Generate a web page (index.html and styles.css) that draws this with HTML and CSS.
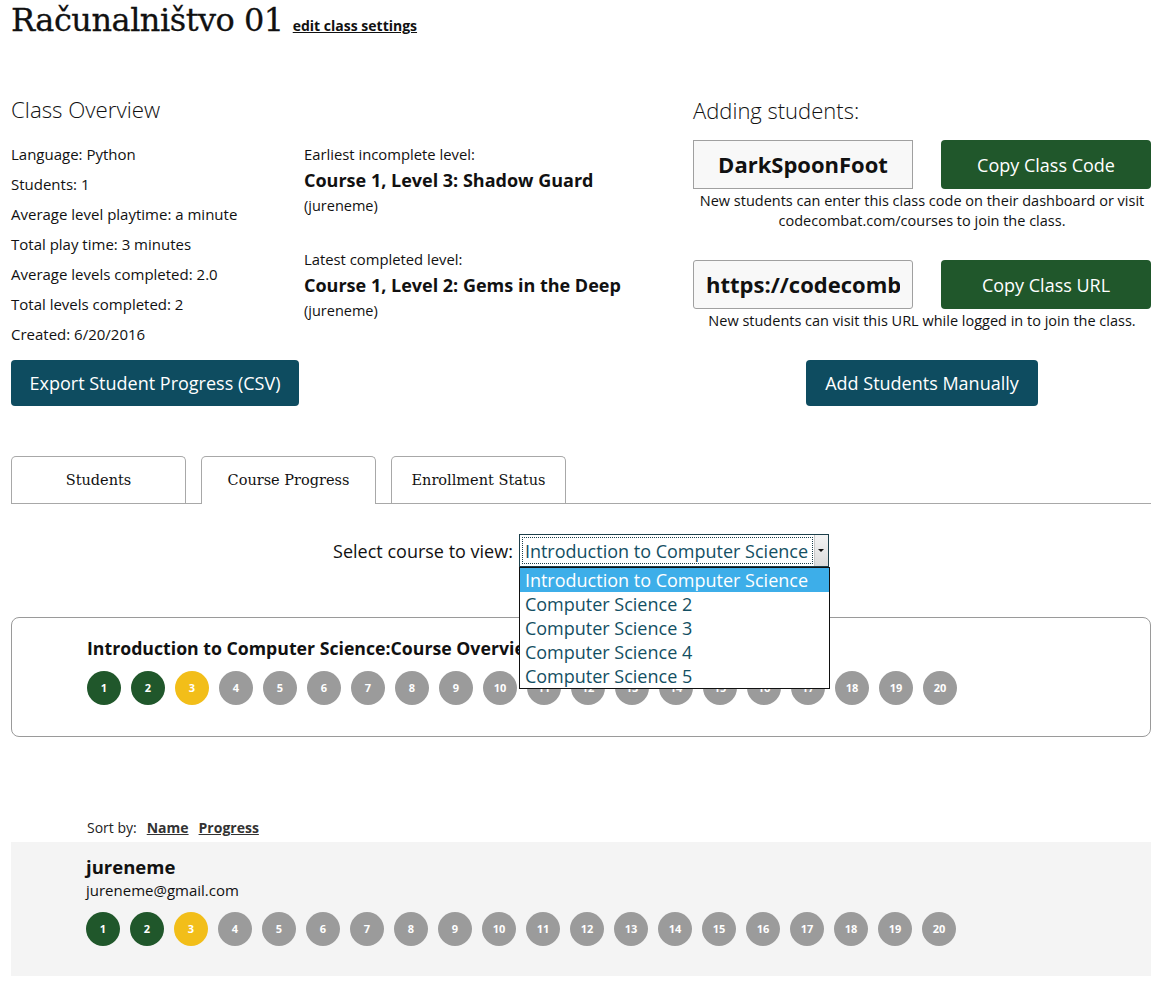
FILE: index.html
```html
<!DOCTYPE html>
<html lang="en">
<head>
<meta charset="utf-8">
<title>Računalništvo 01</title>
<link rel="stylesheet" href="styles.css">
</head>
<body>
<div class="page">
  <header class="title-row">
    <h1 class="class-name">Računalništvo 01</h1>
    <a class="edit-link" href="#">edit class settings</a>
  </header>

  <section class="overview">
    <div class="overview-left">
      <h2 class="section-title">Class Overview</h2>
      <div class="stats-grid">
        <div class="stats">
          <p>Language: Python</p>
          <p>Students: 1</p>
          <p>Average level playtime: a minute</p>
          <p>Total play time: 3 minutes</p>
          <p>Average levels completed: 2.0</p>
          <p>Total levels completed: 2</p>
          <p>Created: 6/20/2016</p>
        </div>
        <div class="levels">
          <div class="level-block">
            <p class="level-label">Earliest incomplete level:</p>
            <p class="level-name">Course 1, Level 3: Shadow Guard</p>
            <p class="level-user">(jureneme)</p>
          </div>
          <div class="level-block">
            <p class="level-label">Latest completed level:</p>
            <p class="level-name">Course 1, Level 2: Gems in the Deep</p>
            <p class="level-user">(jureneme)</p>
          </div>
        </div>
      </div>
      <button class="btn btn-teal btn-export">Export Student Progress (CSV)</button>
    </div>

    <div class="overview-right">
      <h2 class="section-title section-title-right">Adding students:</h2>
      <div class="code-row">
        <div class="code-box">DarkSpoonFoot</div>
        <button class="btn btn-green">Copy Class Code</button>
      </div>
      <p class="caption">New students can enter this class code on their dashboard or visit codecombat.com/courses to join the class.</p>
      <div class="code-row code-row-url">
        <div class="code-box code-box-url"><span class="url-text">https://codecombat.com/courses</span></div>
        <button class="btn btn-green">Copy Class URL</button>
      </div>
      <p class="caption">New students can visit this URL while logged in to join the class.</p>
      <div class="add-row">
        <button class="btn btn-teal btn-add">Add Students Manually</button>
      </div>
    </div>
  </section>

  <nav class="tabs">
    <div class="tab">Students</div>
    <div class="tab tab-active">Course Progress</div>
    <div class="tab">Enrollment Status</div>
  </nav>

  <div class="select-row">
    <span class="select-label">Select course to view:</span>
    <div class="select-wrap">
      <div class="select">
        <span class="select-value">Introduction to Computer Science</span>
        <span class="select-arrow"><span class="tri"></span></span>
      </div>
      <ul class="select-menu">
        <li class="opt opt-selected">Introduction to Computer Science</li>
        <li class="opt">Computer Science 2</li>
        <li class="opt">Computer Science 3</li>
        <li class="opt">Computer Science 4</li>
        <li class="opt">Computer Science 5</li>
      </ul>
    </div>
  </div>

  <section class="course-box">
    <h3 class="course-title">Introduction to Computer Science:Course Overview</h3>
    <div class="dots">
      <span class="dot dot-done">1</span>
      <span class="dot dot-done">2</span>
      <span class="dot dot-current">3</span>
      <span class="dot">4</span>
      <span class="dot">5</span>
      <span class="dot">6</span>
      <span class="dot">7</span>
      <span class="dot">8</span>
      <span class="dot">9</span>
      <span class="dot">10</span>
      <span class="dot">11</span>
      <span class="dot">12</span>
      <span class="dot">13</span>
      <span class="dot">14</span>
      <span class="dot">15</span>
      <span class="dot">16</span>
      <span class="dot">17</span>
      <span class="dot">18</span>
      <span class="dot">19</span>
      <span class="dot">20</span>
    </div>
  </section>

  <div class="sort-row">
    <span class="sort-label">Sort by:</span>
    <a class="sort-link" href="#">Name</a>
    <a class="sort-link" href="#">Progress</a>
  </div>

  <section class="student-row">
    <div class="student-name">jureneme</div>
    <div class="student-email">jureneme@gmail.com</div>
    <div class="dots">
      <span class="dot dot-done">1</span>
      <span class="dot dot-done">2</span>
      <span class="dot dot-current">3</span>
      <span class="dot">4</span>
      <span class="dot">5</span>
      <span class="dot">6</span>
      <span class="dot">7</span>
      <span class="dot">8</span>
      <span class="dot">9</span>
      <span class="dot">10</span>
      <span class="dot">11</span>
      <span class="dot">12</span>
      <span class="dot">13</span>
      <span class="dot">14</span>
      <span class="dot">15</span>
      <span class="dot">16</span>
      <span class="dot">17</span>
      <span class="dot">18</span>
      <span class="dot">19</span>
      <span class="dot">20</span>
    </div>
  </section>
</div>
</body>
</html>
```

FILE: styles.css
```css
* { box-sizing: border-box; }

body {
  margin: 0;
  background: #fff;
  color: #111;
  font-family: "Open Sans", "Liberation Sans", sans-serif;
  font-size: 15px;
  line-height: 20px;
}

p { margin: 0; }

.page {
  width: 1140px;
  margin: 0 12px 0 11px;
}

/* Title */
.title-row {
  display: flex;
  align-items: baseline;
  gap: 9px;
  height: 40px;
}
.class-name {
  margin: 0;
  font-family: "DejaVu Serif", "Liberation Serif", serif;
  font-weight: normal;
  font-size: 32px;
  line-height: 40px;
  letter-spacing: -0.5px;
  color: #111;
  -webkit-text-stroke: 0.3px #111;
}
.edit-link {
  font-weight: bold;
  font-size: 14px;
  color: #111;
  text-decoration: underline;
}

/* Overview */
.overview {
  display: grid;
  grid-template-columns: 682px 458px;
  margin-top: 53px;
}
.section-title {
  margin: 0;
  font-weight: 300;
  font-size: 22.3px;
  line-height: 34px;
  color: #111;
}
.section-title-right { font-size: 22px; }
.stats-grid {
  display: grid;
  grid-template-columns: 293px 1fr;
  margin-top: 17px;
}
.stats {
  display: flex;
  flex-direction: column;
  gap: 10px;
}
.levels {
  display: flex;
  flex-direction: column;
  gap: 33px;
}
.level-label { font-size: 14.8px; }
.level-name {
  font-weight: bold;
  font-size: 18px;
  line-height: 24px;
  margin-top: 4px;
}
.level-user {
  font-size: 14.5px;
  margin-top: 4px;
}

.btn {
  border: none;
  border-radius: 4px;
  color: #fff;
  font-family: "Open Sans", "Liberation Sans", sans-serif;
  font-size: 18px;
  cursor: pointer;
}
.btn-teal { background: #0e4c60; }
.btn-green { background: #20572b; }
.btn-export {
  margin-top: 16px;
  width: 288px;
  height: 46px;
}

.code-row {
  display: flex;
  justify-content: space-between;
  margin-top: 13px;
  height: 49px;
}
.code-row-url { margin-top: 29px; }
.code-box {
  width: 220px;
  height: 49px;
  border: 1px solid #a0a0a0;
  background: #f8f8f8;
  font-weight: bold;
  font-size: 22px;
  line-height: 47px;
  text-align: center;
  overflow: hidden;
  white-space: nowrap;
}
.code-box-url {
  border-radius: 3px;
  text-align: left;
  padding: 0 12px;
}
.url-text {
  display: block;
  overflow: hidden;
}
.code-row .btn {
  width: 210px;
  height: 49px;
}
.caption {
  margin-top: 2px;
  font-size: 14.5px;
  text-align: center;
}
.add-row {
  display: flex;
  justify-content: center;
  margin-top: 29px;
}
.btn-add {
  width: 232px;
  height: 46px;
}

/* Tabs */
.tabs {
  display: flex;
  gap: 15px;
  margin-top: 50px;
  border-bottom: 1px solid #a8a8a8;
}
.tab {
  width: 175px;
  height: 47px;
  border: 1px solid #a8a8a8;
  border-bottom: none;
  border-radius: 5px 5px 0 0;
  font-family: "DejaVu Serif", "Liberation Serif", serif;
  font-size: 14.5px;
  line-height: 46px;
  text-align: center;
  color: #111;
  background: #fff;
}
.tab-active {
  margin-bottom: -1px;
  height: 48px;
}

/* Select */
.select-row {
  display: flex;
  justify-content: center;
  align-items: center;
  gap: 6px;
  margin-top: 30px;
  height: 33px;
}
.select-label {
  font-size: 18px;
}
.select-wrap {
  position: relative;
  width: 310px;
  height: 33px;
}
.select {
  display: flex;
  height: 33px;
  border: 1px solid #1c3f4a;
  background: #fff;
}
.select-value {
  flex: 1;
  margin: 2px 1px 2px 2px;
  padding-left: 2px;
  border: 1px dotted #1c3f4a;
  font-size: 18px;
  line-height: 26px;
  color: #134f63;
  white-space: nowrap;
  overflow: hidden;
}
.select-arrow {
  width: 14px;
  display: flex;
  align-items: center;
  justify-content: center;
  background: linear-gradient(#f4f4f4, #dcdcdc);
  border-left: 1px solid #c8c8c8;
}
.tri {
  width: 0;
  height: 0;
  border-left: 3px solid transparent;
  border-right: 3px solid transparent;
  border-top: 3px solid #111;
}
.select-menu {
  position: absolute;
  left: 0;
  top: 33px;
  width: 311px;
  margin: 0;
  padding: 0;
  list-style: none;
  border: 1px solid #111;
  background: #fff;
  z-index: 5;
}
.opt {
  height: 24px;
  padding-left: 5px;
  font-size: 18px;
  line-height: 24px;
  color: #134f63;
  white-space: nowrap;
}
.opt-selected {
  background: #3daee9;
  color: #fff;
}

/* Course box */
.course-box {
  margin-top: 50px;
  border: 1px solid #9a9a9a;
  border-radius: 8px;
  padding: 18px 0 31px 75px;
}
.course-title {
  margin: 0;
  font-size: 17.7px;
  line-height: 24px;
  font-weight: bold;
  white-space: nowrap;
}
.dots {
  display: flex;
  gap: 10px;
  margin-top: 11px;
}
.dot {
  width: 34px;
  height: 34px;
  border-radius: 50%;
  background: #9b9b9b;
  color: #fff;
  font-weight: bold;
  font-size: 11px;
  line-height: 34px;
  text-align: center;
}
.dot-done { background: #20572b; }
.dot-current { background: #f2be19; }

/* Sort */
.sort-row {
  margin-top: 81px;
  padding-left: 76px;
  font-size: 14px;
  line-height: 20px;
  color: #222;
  display: flex;
  gap: 10px;
}
.sort-link {
  color: #333;
  font-weight: bold;
  text-decoration: underline;
}

/* Student row */
.student-row {
  margin-top: 4px;
  background: #f4f4f4;
  padding: 13px 0 30px 75px;
}
.student-name {
  font-weight: bold;
  font-size: 18.5px;
  line-height: 24px;
}
.student-email {
  margin-top: 1px;
  font-size: 15px;
  line-height: 20px;
}
.student-row .dots { margin-top: 12px; }
```
